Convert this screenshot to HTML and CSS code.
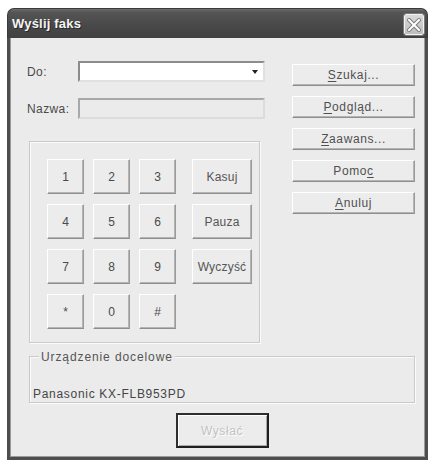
FILE: index.html
```html
<!DOCTYPE html>
<html lang="pl">
<head>
<meta charset="utf-8">
<title>Wyślij faks</title>
<link rel="stylesheet" href="styles.css">
</head>
<body>
<div class="window">
  <div class="titlebar">
    <span class="title">Wyślij faks</span>
    <span class="close">
      <svg width="14" height="14" viewBox="0 0 14 14">
        <path d="M2 2 L12 12 M12 2 L2 12" stroke="#7a7a7a" stroke-width="4" stroke-linecap="square"/>
        <path d="M2 2 L12 12 M12 2 L2 12" stroke="#ffffff" stroke-width="2" stroke-linecap="square"/>
      </svg>
    </span>
  </div>
  <div class="client">
    <div class="top">
      <div class="left">
        <div class="field">
          <span class="label">Do:</span>
          <span class="combo"><span class="arrow"></span></span>
        </div>
        <div class="field field-second">
          <span class="label">Nazwa:</span>
          <span class="input disabled"></span>
        </div>
        <div class="group keypad">
          <span class="btn key">1</span>
          <span class="btn key">2</span>
          <span class="btn key">3</span>
          <span class="btn key action">Kasuj</span>
          <span class="btn key">4</span>
          <span class="btn key">5</span>
          <span class="btn key">6</span>
          <span class="btn key action">Pauza</span>
          <span class="btn key">7</span>
          <span class="btn key">8</span>
          <span class="btn key">9</span>
          <span class="btn key action">Wyczyść</span>
          <span class="btn key">*</span>
          <span class="btn key">0</span>
          <span class="btn key">#</span>
        </div>
      </div>
      <div class="right">
        <span class="btn side"><u>S</u>zukaj...</span>
        <span class="btn side"><u>P</u>odgląd...</span>
        <span class="btn side"><u>Z</u>aawans...</span>
        <span class="btn side">Pomo<u>c</u></span>
        <span class="btn side"><u>A</u>nuluj</span>
      </div>
    </div>
    <div class="group device">
      <span class="legend">Urządzenie docelowe</span>
      <div class="device-name">Panasonic KX-FLB953PD</div>
    </div>
    <div class="footer">
      <span class="btn default">Wysłać</span>
    </div>
  </div>
</div>
</body>
</html>
```

FILE: styles.css
```css
html, body {
  margin: 0;
  padding: 0;
  background: #ffffff;
}

body {
  font-family: "Liberation Sans", Arial, sans-serif;
  font-size: 12px;
  color: #454545;
}

.window {
  margin: 8px 0 0 7px;
  width: 421px;
  height: 452px;
  display: flex;
  flex-direction: column;
}

.titlebar {
  height: 30px;
  flex: none;
  box-sizing: border-box;
  border-radius: 7px 7px 0 0;
  background: linear-gradient(#6e6e6e 0px, #555555 3px, #4a4a4a 15px, #404040 100%);
  border: 1px solid #3a3a3a;
  border-bottom: none;
  display: flex;
  align-items: center;
  justify-content: space-between;
  padding: 0 3px 0 4px;
}

.title {
  color: #f4f4f4;
  font-weight: bold;
  font-size: 13px;
  letter-spacing: 0.2px;
  text-shadow: 1px 1px 0 #2a2a2a;
}

.close {
  width: 20px;
  height: 21px;
  box-sizing: border-box;
  background: linear-gradient(#dadada, #bdbdbd);
  border: 1px solid #f2f2f2;
  outline: 1px solid #7a7a7a;
  border-radius: 2px;
  display: flex;
  align-items: center;
  justify-content: center;
  margin-top: 2px;
}

.client {
  flex: 1;
  box-sizing: border-box;
  background: #ebebeb;
  border: 3px solid #4e4e4e;
  border-top: none;
  box-shadow: inset 1px 0 #9a9a9a, inset -1px 0 #9a9a9a, inset 0 -1px #9a9a9a;
  padding: 23px 10px 0 17px;
}

.top {
  display: flex;
  justify-content: space-between;
}

.left {
  width: 238px;
}

.field {
  display: flex;
  align-items: center;
  height: 21px;
}

.field-second {
  margin-top: 16px;
}

.label {
  width: 51px;
  flex: none;
  letter-spacing: 0.4px;
  color: #4a4a4a;
}

.combo, .input {
  flex: 1;
  height: 21px;
  box-sizing: border-box;
  border: 2px solid;
  border-color: #8c8c8c #e0e0e0 #e0e0e0 #8c8c8c;
  background: #ffffff;
  display: flex;
  align-items: center;
  justify-content: flex-end;
}

.input.disabled {
  background: #ebebeb;
  border-color: #a8a8a8 #dcdcdc #dcdcdc #a8a8a8;
}

.arrow {
  width: 0;
  height: 0;
  border-left: 3px solid transparent;
  border-right: 3px solid transparent;
  border-top: 4px solid #222222;
  margin-right: 5px;
}

.group {
  box-sizing: border-box;
  border: 1px solid #c9c9c9;
  box-shadow: inset 1px 1px #fbfbfb, 1px 1px #fbfbfb;
}

.keypad {
  margin: 22px 0 0 2px;
  width: 231px;
  height: 202px;
  padding: 17px 0 0 17px;
  display: grid;
  grid-template-columns: 37px 37px 37px 67px;
  grid-auto-rows: 35px;
  column-gap: 9px;
  row-gap: 10px;
}

.btn {
  box-sizing: border-box;
  display: flex;
  align-items: center;
  justify-content: center;
  background: #ececec;
  border: 1px solid;
  border-color: #ffffff #9a9a9a #8e8e8e #ffffff;
  box-shadow: inset -1px -1px #b4b4b4;
  color: #4a4a4a;
  white-space: nowrap;
}

.key {
  font-size: 12px;
}

.action {
  width: 60px;
  justify-self: end;
  letter-spacing: 0.2px;
  color: #555555;
}

.right {
  width: 123px;
  margin-top: 3px;
  display: flex;
  flex-direction: column;
  gap: 10px;
}

.side {
  height: 22px;
  letter-spacing: 0.6px;
  color: #505050;
}

.side u {
  text-decoration-thickness: 1px;
  text-underline-offset: 2px;
}

.device {
  margin: 13px 0 0 2px;
  width: 386px;
  height: 47px;
  padding: 0 0 0 3px;
}

.legend {
  display: block;
  width: fit-content;
  margin: -7px 0 0 6px;
  padding: 0 2px;
  line-height: 14px;
  background: #ebebeb;
  letter-spacing: 0.9px;
  color: #555555;
}

.device-name {
  margin-top: 23px;
  line-height: 14px;
  letter-spacing: 0.7px;
}

.footer {
  display: flex;
  justify-content: center;
  margin-top: 10px;
  padding-left: 2px;
}

.default {
  width: 93px;
  height: 35px;
  border: 2px solid #2e2e2e;
  border-right-color: #1e1e1e;
  border-bottom-color: #1e1e1e;
  box-shadow: inset 1px 1px #ffffff, inset -1px -1px #a8a8a8;
  color: #c2c2c2;
  text-shadow: 1px 1px 0 #ffffff;
  letter-spacing: 0.6px;
}
```
